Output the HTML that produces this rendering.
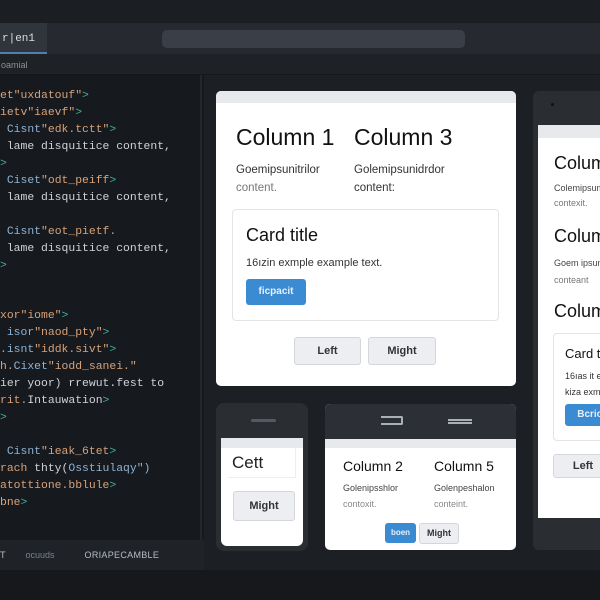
<!DOCTYPE html>
<html><head><style>
*{margin:0;padding:0;box-sizing:border-box}
body{width:600px;height:600px;background:#16181b;position:relative;overflow:hidden;font-family:"Liberation Sans",sans-serif}
.a{position:absolute}
.code{font-family:"Liberation Mono",monospace;font-size:11.4px;color:#d0d4d8;white-space:pre}
.code div{position:absolute;left:0}
.s{color:#d8a27a}.g{color:#3fb39a}.b{color:#8fb3d6}
.btn{position:absolute;border:1px solid #d4d6da;background:#eceef1;border-radius:3px;font-size:11px;font-weight:bold;color:#333;text-align:center}
.blue{position:absolute;background:#3a8bd2;border-radius:3px;color:#e6f0fa;font-size:10px;font-weight:bold;text-align:center}
h2{font-weight:normal;color:#111}
</style></head><body>
<div class="a" style="left:0;top:0;width:600px;height:23px;background:#1b1e22"></div>
<div class="a" style="left:0;top:23px;width:600px;height:31px;background:#262a30"></div>
<div class="a" style="left:0;top:23px;width:47px;height:31px;background:#30353c;border-bottom:2px solid #4d7fb0;color:#d8dde3;font-size:11px;font-family:'Liberation Mono',monospace;padding:10px 0 0 2px">r|en1</div>
<div class="a" style="left:162px;top:30px;width:303px;height:18px;background:#3a3f47;border-radius:5px"></div>
<div class="a" style="left:0;top:54px;width:600px;height:21px;background:#1e2125;border-bottom:1px solid #14161a;color:#8a9098;font-size:9px;padding:6px 0 0 1px">oamial</div>
<div class="a" style="left:0;top:75px;width:202px;height:465px;background:#16191d;border-right:2px solid #23272c"></div>
<div class="a" style="left:204px;top:75px;width:396px;height:495px;background:#1c1f23"></div>
<div class="a" style="left:0;top:540px;width:204px;height:30px;background:#1f2327;color:#b8bdc4;font-size:9px;padding:10px 0 0 0">T<span style="margin-left:20px;color:#7a828c">ocuuds</span><span style="margin-left:30px;letter-spacing:.3px">ORIAPECAMBLE</span></div>
<div class="a code" style="left:0;top:90px;width:202px;height:440px">
<div style="top:0"><span class="s">et"uxdatouf"</span><span class="g">&gt;</span></div>
<div style="top:17px"><span class="s">ietv"iaevf"</span><span class="g">&gt;</span></div>
<div style="top:34px"> <span class="b">Cisnt</span><span class="s">"edk.tctt"</span><span class="g">&gt;</span></div>
<div style="top:51px"> lame disquitice content,</div>
<div style="top:68px"><span class="g">&gt;</span></div>
<div style="top:85px"> <span class="b">Ciset</span><span class="s">"odt_peiff</span><span class="g">&gt;</span></div>
<div style="top:102px"> lame disquitice content,</div>
<div style="top:136px"> <span class="b">Cisnt</span><span class="s">"eot_pietf.</span></div>
<div style="top:153px"> lame disquitice content,</div>
<div style="top:170px"><span class="g">&gt;</span></div>
<div style="top:220px"><span class="s">xor"iome"</span><span class="g">&gt;</span></div>
<div style="top:237px"> <span class="b">isor</span><span class="s">"naod_pty"</span><span class="g">&gt;</span></div>
<div style="top:254px"><span class="b">.isnt</span><span class="s">"iddk.sivt"</span><span class="g">&gt;</span></div>
<div style="top:271px"><span class="s">h.</span><span class="b">Cixet</span><span class="s">"iodd_sanei."</span></div>
<div style="top:288px">ier yoor) rrewut.fest to</div>
<div style="top:305px"><span class="s">rit.</span>Intauwation<span class="g">&gt;</span></div>
<div style="top:322px"><span class="g">&gt;</span></div>
<div style="top:356px"> <span class="b">Cisnt</span><span class="s">"ieak_6tet</span><span class="g">&gt;</span></div>
<div style="top:373px"><span class="s">rach</span> thty(<span class="b">Osstiulaqy")</span></div>
<div style="top:390px"><span class="s">atottione.bblule</span><span class="g">&gt;</span></div>
<div style="top:407px"><span class="s">bne</span><span class="g">&gt;</span></div>
</div>

<div class="a" style="left:216px;top:91px;width:300px;height:295px;background:#fff;border-radius:5px;overflow:hidden">
<div class="a" style="left:0;top:0;width:300px;height:12px;background:#e8e9ec"></div>
<h2 class="a" style="left:20px;top:33px;font-size:23px">Column 1</h2>
<h2 class="a" style="left:138px;top:33px;font-size:23px">Column 3</h2>
<div class="a" style="left:20px;top:70px;font-size:11.5px;color:#333;line-height:18px">Goemipsunitrilor<br><span style="color:#777">content.</span></div>
<div class="a" style="left:138px;top:70px;font-size:11.5px;color:#333;line-height:18px">Golemipsunidrdor<br>content:</div>
<div class="a" style="left:16px;top:118px;width:267px;height:112px;border:1px solid #e2e4e7;border-radius:4px">
<div class="a" style="left:13px;top:15px;font-size:18px;color:#111">Card title</div>
<div class="a" style="left:13px;top:47px;font-size:11px;color:#333">16ızin exmple example text.</div>
<div class="blue" style="left:13px;top:69px;width:60px;height:26px;line-height:26px">ficpacit</div>
</div>
<div class="btn" style="left:78px;top:246px;width:67px;height:28px;line-height:26px">Left</div>
<div class="btn" style="left:152px;top:246px;width:68px;height:28px;line-height:26px">Might</div>
</div>

<div class="a" style="left:533px;top:91px;width:80px;height:459px;background:#2a2e33;border-radius:6px"></div>
<div class="a" style="left:551px;top:103px;width:3px;height:3px;background:#111;border-radius:50%"></div>
<div class="a" style="left:538px;top:125px;width:70px;height:393px;background:#fff;overflow:hidden">
<div class="a" style="left:0;top:0;width:70px;height:13px;background:#e8e9ec"></div>
<h2 class="a" style="left:16px;top:28px;font-size:18px">Column</h2>
<div class="a" style="left:16px;top:56px;font-size:9px;color:#444;line-height:15px;white-space:nowrap">Colemipsumdor<br><span style="color:#777">contexit.</span></div>
<h2 class="a" style="left:16px;top:101px;font-size:18px">Column</h2>
<div class="a" style="left:16px;top:130px;font-size:9px;color:#444;line-height:17px;white-space:nowrap">Goem ipsum<br><span style="color:#777">conteant</span></div>
<h2 class="a" style="left:16px;top:176px;font-size:18px">Column</h2>
<div class="a" style="left:15px;top:208px;width:70px;height:108px;border:1px solid #e2e4e7;border-radius:4px">
<div class="a" style="left:11px;top:12px;font-size:13px;color:#111;white-space:nowrap">Card title</div>
<div class="a" style="left:11px;top:34px;font-size:9px;color:#333;line-height:16px;white-space:nowrap">16ıas it ex<br>kiza exmp</div>
<div class="blue" style="left:11px;top:70px;width:50px;height:22px;line-height:22px">Bcrio</div>
</div>
<div class="btn" style="left:15px;top:329px;width:60px;height:24px;line-height:22px">Left</div>
</div>

<div class="a" style="left:216px;top:403px;width:92px;height:148px;background:#2a2e33;border-radius:8px"></div>
<div class="a" style="left:251px;top:419px;width:25px;height:3px;background:#555a61;border-radius:2px"></div>
<div class="a" style="left:221px;top:438px;width:82px;height:108px;background:#fff;border-radius:0 0 6px 6px;overflow:hidden">
<div class="a" style="left:0;top:0;width:82px;height:10px;background:#e8e9ec"></div>
<div class="a" style="left:7px;top:10px;width:68px;height:30px;border-right:1px solid #eee;border-bottom:1px solid #eee;font-size:17px;color:#222;padding:5px 0 0 4px">Cett</div>
<div class="btn" style="left:12px;top:53px;width:62px;height:30px;line-height:28px">Might</div>
</div>

<div class="a" style="left:325px;top:404px;width:191px;height:146px;background:#fff;border-radius:5px;overflow:hidden">
<div class="a" style="left:0;top:0;width:191px;height:35px;background:#2c3036"></div>
<div class="a" style="left:56px;top:12px;width:22px;height:9px;border:2px solid #a9afb7;border-left:none;border-radius:0 2px 2px 0"></div>
<div class="a" style="left:123px;top:15px;width:24px;height:5px;border-top:2px solid #a9afb7;border-bottom:2px solid #a9afb7"></div>
<div class="a" style="left:0;top:35px;width:191px;height:9px;background:#e8e9ec"></div>
<div class="a" style="left:18px;top:54px;font-size:14px;color:#111">Column 2</div>
<div class="a" style="left:109px;top:54px;font-size:14px;color:#111">Column 5</div>
<div class="a" style="left:18px;top:76px;font-size:9px;color:#444;line-height:16px">Golenipsshlor<br><span style="color:#888">contoxit.</span></div>
<div class="a" style="left:109px;top:76px;font-size:9px;color:#444;line-height:16px">Golenpeshalon<br><span style="color:#888">conteint.</span></div>
<div class="blue" style="left:60px;top:119px;width:31px;height:20px;line-height:20px;font-size:8px">boen</div>
<div class="btn" style="left:94px;top:119px;width:40px;height:21px;line-height:19px;font-size:9px">Might</div>
</div>
</body></html>
